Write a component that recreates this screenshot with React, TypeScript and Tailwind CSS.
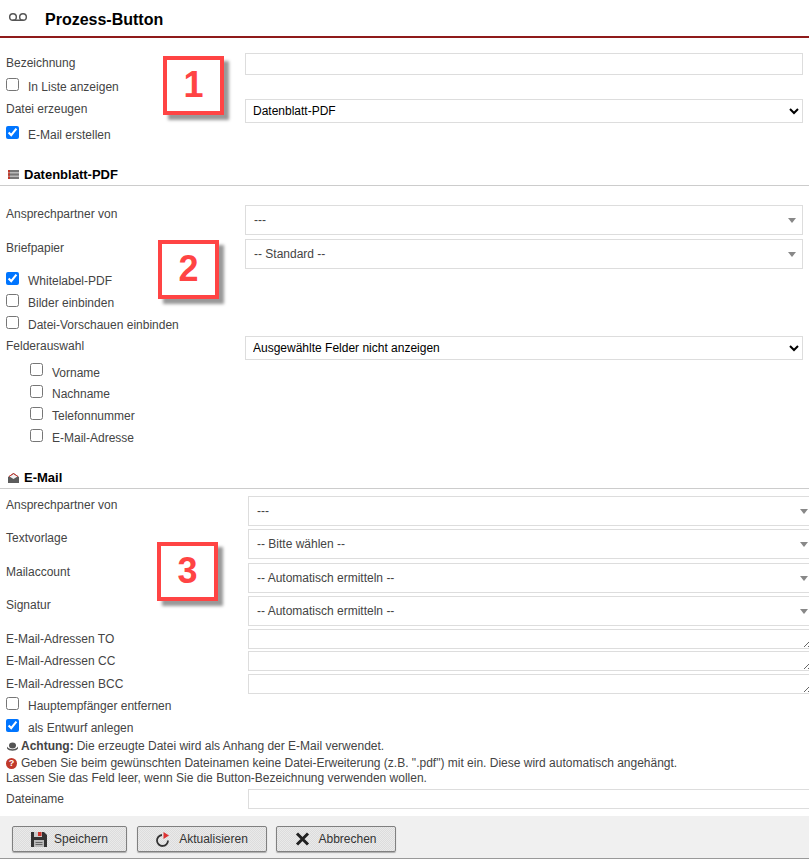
import type { ReactNode } from 'react'
import { Voicemail } from 'lucide-react'

const FONT = "font-['Liberation_Sans',Arial,sans-serif]"

function Check({ label, checked, indent, short }: { label: string; checked?: boolean; indent?: boolean; short?: boolean }) {
  return (
    <label className={`flex items-center ${short ? 'h-[21px]' : 'h-[22px]'} ${indent ? 'pl-[30px]' : 'pl-[6px]'}`}>
      <input type="checkbox" defaultChecked={checked} className="m-0 w-[13px] h-[13px] -translate-y-[2px]" />
      <span className="ml-[9px] translate-y-[1px] text-[12px] text-[#444]">{label}</span>
    </label>
  )
}

function Triangle() {
  return (
    <svg width="8" height="5" viewBox="0 0 8 5" className="shrink-0">
      <path d="M0 0h8L4 5z" fill="#888" />
    </svg>
  )
}

// chosen-style dropdown, 30px high
function FakeSelect({ value, wide }: { value: string; wide?: boolean }) {
  return (
    <div
      className={`flex items-center justify-between h-[30px] border border-[#ddd] pl-[8px] text-[12px] text-[#444] ${
        wide ? 'w-[565px] ml-[248px] pr-[4px]' : 'w-[558px] ml-[245px] pr-[6px]'
      }`}
    >
      <span>{value}</span>
      <Triangle />
    </div>
  )
}

function NativeSelect({ value }: { value: string }) {
  return (
    <select
      defaultValue={value}
      className="block h-[24px] w-[558px] border border-[#ddd] bg-white pl-[3px] text-[12px] text-black"
    >
      <option>{value}</option>
    </select>
  )
}

function Label({ children, className = '' }: { children: ReactNode; className?: string }) {
  return <div className={`absolute left-[6px] text-[12px] leading-[14px] text-[#444] ${className}`}>{children}</div>
}

function SelectRow({ label, value, mt }: { label: string; value: string; mt: string }) {
  return (
    <div className={`relative ${mt}`}>
      <Label className="top-[2px]">{label}</Label>
      <FakeSelect value={value} wide />
    </div>
  )
}

function AreaRow({ label, mt }: { label: string; mt: string }) {
  return (
    <div className={`flex items-center ${mt}`}>
      <span className="w-[248px] shrink-0 pl-[6px] text-[12px] text-[#444]">{label}</span>
      <div className="relative w-[565px] shrink-0 h-[20px] border border-[#ddd]">
        <svg width="7" height="7" viewBox="0 0 7 7" className="absolute right-[1px] bottom-[1px]">
          <path d="M0 7L7 0M4 7l3-3" stroke="#666" strokeWidth="1" fill="none" />
        </svg>
      </div>
    </div>
  )
}

function SectionHead({ icon, title, className }: { icon: ReactNode; title: string; className: string }) {
  return (
    <div className={`flex items-center h-[22px] border-b border-[#ccc] pl-[8px] ${className}`}>
      {icon}
      <span className="ml-[5px] text-[13px] font-bold text-black">{title}</span>
    </div>
  )
}

function Callout({ n, className }: { n: number; className: string }) {
  return (
    <div
      className={`absolute flex items-center justify-center w-[61px] h-[59px] border-[4px] border-[#ff4444] bg-white text-[36px] font-bold text-[#ff4444] shadow-[5px_5px_3px_#999] ${className}`}
    >
      <span className="-translate-y-[1px]">{n}</span>
    </div>
  )
}

function FooterButton({ icon, label, className }: { icon: ReactNode; label: string; className: string }) {
  return (
    <button
      className={`flex items-center justify-center h-[26px] rounded-[2px] border border-[#808080] bg-[repeating-conic-gradient(#dcdcdc_0_25%,#eaeaea_0_50%)] bg-[length:2px_2px] text-[12px] text-[#333] shadow-[0_1px_1px_#aaa] ${className}`}
    >
      {icon}
      <span>{label}</span>
    </button>
  )
}

export default function App() {
  return (
    <div className={`relative w-[809px] h-[859px] overflow-hidden bg-white ${FONT}`}>
      {/* Kopf */}
      <div className="flex items-center h-[38px] border-b-2 border-[#8f1a1a] pl-[8px]">
        <Voicemail size={20} strokeWidth={1.75} className="text-[#555] -translate-y-[1px]" />
        <h1 className="ml-[17px] translate-y-[2px] text-[16px] font-bold text-black">Prozess-Button</h1>
      </div>

      {/* Allgemein */}
      <div className="relative h-[126px] pt-[15px]">
        <Label className="top-[18px]">Bezeichnung</Label>
        <input className="block ml-[245px] w-[558px] h-[22px] border border-[#ddd]" />
        <div className="absolute left-0 top-[37px]">
          <Check label="In Liste anzeigen" />
        </div>
        <Label className="top-[64px]">Datei erzeugen</Label>
        <div className="ml-[245px] mt-[24px]">
          <NativeSelect value="Datenblatt-PDF" />
        </div>
        <div className="absolute left-0 top-[85px]">
          <Check label="E-Mail erstellen" checked />
        </div>
      </div>

      <SectionHead
        className=""
        title="Datenblatt-PDF"
        icon={
          <svg width="11" height="9" viewBox="0 0 11 9">
            <path d="M0 0h11v2.5H0zM0 3.25h11v2.5H0zM0 6.5h11V9H0z" fill="#777" />
            <path d="M0 0h2v2.5H0zM0 3.25h2v2.5H0zM0 6.5h2V9H0z" fill="#c0392b" />
          </svg>
        }
      />

      {/* Datenblatt-PDF */}
      <div className="relative pt-[19px] h-[272px]">
        <Label className="top-[21px]">Ansprechpartner von</Label>
        <FakeSelect value="---" />
        <Label className="top-[55px]">Briefpapier</Label>
        <div className="mt-[4px]">
          <FakeSelect value="-- Standard --" />
        </div>
        <div>
          <Check label="Whitelabel-PDF" checked />
          <Check label="Bilder einbinden" />
          <Check label="Datei-Vorschauen einbinden" />
        </div>
        <Label className="top-[153px]">Felderauswahl</Label>
        <div className="ml-[245px] mt-[1px]">
          <NativeSelect value="Ausgewählte Felder nicht anzeigen" />
        </div>
        <div className="mt-[1px]">
          <Check indent short label="Vorname" />
          <Check indent label="Nachname" />
          <Check indent label="Telefonnummer" />
          <Check indent label="E-Mail-Adresse" />
        </div>
      </div>

      <SectionHead
        className="mt-[9px]"
        title="E-Mail"
        icon={
          <svg width="11" height="10" viewBox="0 0 11 10">
            <path d="M0 4l5.5-4L11 4v6H0z" fill="#5c5c5c" />
            <path d="M1.5 3.5L5.5 1l4 2.5-4 2.5z" fill="#f2f2f2" />
            <path d="M1 3.5L5.5 .5 10 3.5" stroke="#d0342c" strokeWidth="1" fill="none" />
          </svg>
        }
      />

      {/* E-Mail */}
      <div className="pt-[7px]">
        <SelectRow mt="" label="Ansprechpartner von" value="---" />
        <SelectRow mt="mt-[3px]" label="Textvorlage" value="-- Bitte wählen --" />
        <SelectRow mt="mt-[4px]" label="Mailaccount" value="-- Automatisch ermitteln --" />
        <SelectRow mt="mt-[3px]" label="Signatur" value="-- Automatisch ermitteln --" />
        <AreaRow mt="mt-[3px]" label="E-Mail-Adressen TO" />
        <AreaRow mt="mt-[2px]" label="E-Mail-Adressen CC" />
        <AreaRow mt="mt-[3px]" label="E-Mail-Adressen BCC" />
        <div>
          <Check label="Hauptempfänger entfernen" />
          <Check label="als Entwurf anlegen" checked />
        </div>
        <div className="flex items-center h-[14px] mt-[1px] pl-[7px] text-[12px] text-[#444]">
          <svg width="11" height="9" viewBox="0 0 11 9" className="mr-[3px]">
            <ellipse cx="5.5" cy="3.5" rx="3.5" ry="3" fill="#555" />
            <path d="M0 4.5c2 3.5 9 3.5 11 0v2c-2 3-9 3-11 0z" fill="#555" />
          </svg>
          <b className="font-bold">Achtung:</b>
          <span className="ml-[3px]">Die erzeugte Datei wird als Anhang der E-Mail verwendet.</span>
        </div>
        <div className="mt-[3px] pl-[6px] text-[12px] leading-[15px] text-[#444]">
          <div className="flex items-center">
            <span className="flex items-center justify-center w-[11px] h-[11px] mr-[4px] rounded-full bg-[#c0392b] text-[9px] font-bold leading-none text-white">
              ?
            </span>
            Geben Sie beim gewünschten Dateinamen keine Datei-Erweiterung (z.B. ".pdf") mit ein. Diese wird automatisch angehängt.
          </div>
          <div>Lassen Sie das Feld leer, wenn Sie die Button-Bezeichnung verwenden wollen.</div>
        </div>
        <div className="flex items-center mt-[3px]">
          <span className="w-[248px] shrink-0 pl-[6px] text-[12px] text-[#444]">Dateiname</span>
          <input className="w-[565px] shrink-0 h-[20px] border border-[#ddd]" />
        </div>
      </div>

      {/* Fußleiste */}
      <div className="absolute left-0 right-0 bottom-0 flex items-start h-[43px] border-b border-[#999] bg-[#f0f0f0] pt-[10px] pl-[12px]">
        <FooterButton
          className="w-[115px] mr-[10px]"
          label="Speichern"
          icon={
            <svg width="16" height="15" viewBox="0 0 16 15" className="mr-[7px]">
              <path d="M0 0h13l3 3v12H0z" fill="#333" />
              <path d="M3 0h8v5H3z" fill="#ccc" />
              <path d="M7 0h3.5v4H7z" fill="#d0342c" />
              <path d="M3 8h10v7H3z" fill="#bbb" />
              <path d="M4.5 10.5h7M4.5 12.5h7" stroke="#666" />
            </svg>
          }
        />
        <FooterButton
          className="w-[130px] mr-[9px]"
          label="Aktualisieren"
          icon={
            <svg width="15" height="15" viewBox="0 0 15 15" className="mr-[8px]">
              <path d="M6 3a5.5 5.5 0 1 0 6 5.5" stroke="#333" strokeWidth="1.8" fill="none" />
              <path d="M7.5 0L13 3.5 7.5 7z" fill="#d33" />
            </svg>
          }
        />
        <FooterButton
          className="w-[120px]"
          label="Abbrechen"
          icon={
            <svg width="15" height="14" viewBox="0 0 15 14" className="mr-[8px]">
              <path d="M2 1.5l11 11M13 1.5l-11 11" stroke="#222" strokeWidth="3" />
            </svg>
          }
        />
      </div>

      {/* Markierungen */}
      <Callout n={1} className="left-[163px] top-[56px]" />
      <Callout n={2} className="left-[158px] top-[240px]" />
      <Callout n={3} className="left-[157px] top-[542px]" />
    </div>
  )
}
